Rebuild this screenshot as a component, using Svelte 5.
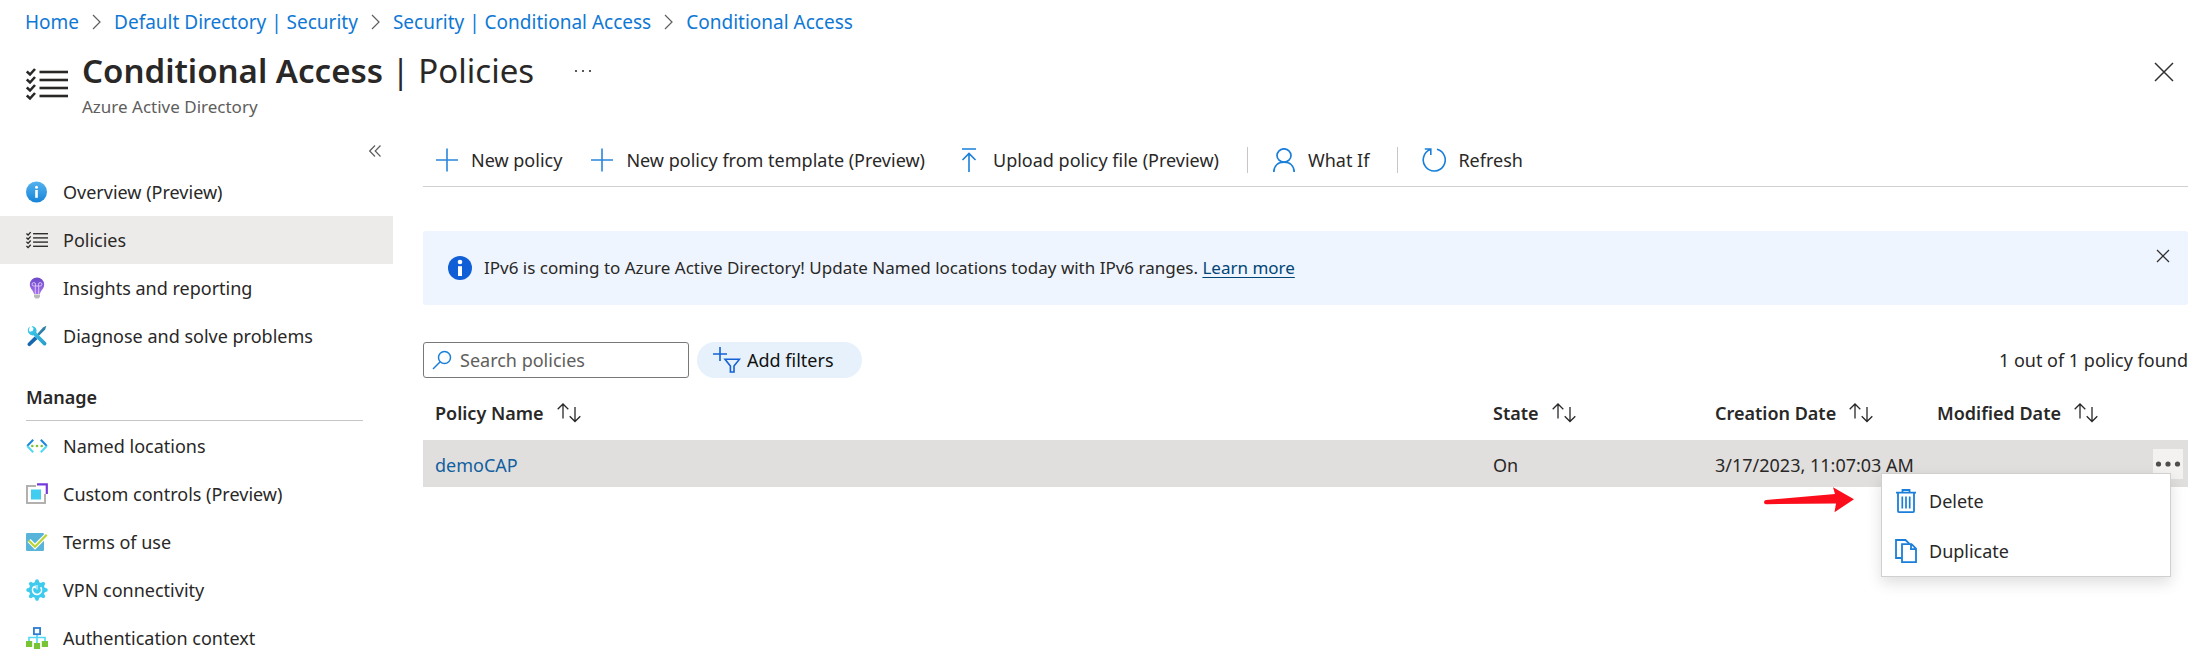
<script>
  const crumbs = ['Home', 'Default Directory | Security', 'Security | Conditional Access', 'Conditional Access'];
  const general = [
    { label: 'Overview (Preview)', icon: 'info' },
    { label: 'Policies', icon: 'policies', active: true },
    { label: 'Insights and reporting', icon: 'bulb' },
    { label: 'Diagnose and solve problems', icon: 'tools' }
  ];
  const manage = [
    { label: 'Named locations', icon: 'locations' },
    { label: 'Custom controls (Preview)', icon: 'controls' },
    { label: 'Terms of use', icon: 'terms' },
    { label: 'VPN connectivity', icon: 'gear' },
    { label: 'Authentication context', icon: 'tree' }
  ];
  const columns = [
    { label: 'Policy Name', cls: 'name' },
    { label: 'State', cls: 'state' },
    { label: 'Creation Date', cls: 'created' },
    { label: 'Modified Date', cls: 'modified' }
  ];
  let query = $state('');
  let menuOpen = $state(true);
  let bannerOpen = $state(true);
</script>

{#snippet checklist(size)}
  <svg width={size} height={size} viewBox="0 0 42 42" fill="none" stroke="#292827" aria-hidden="true">
    {#each [9, 17, 25, 33] as y}
      <path d="M13.500 {y}H42" stroke-width="2.600" />
      <path d="M.8 {y - 0.500}l3.200 3 5-5.500" stroke-width="2.600" />
    {/each}
  </svg>
{/snippet}

{#snippet navIcon(name)}
  {#if name === 'policies'}
    {@render checklist(22)}
  {:else}
    <svg width="22" height="22" viewBox="0 0 22 22" fill="none" aria-hidden="true">
      {#if name === 'info'}
        <circle cx="10.500" cy="11" r="10.500" fill="url(#gInfo)" />
        <circle cx="10.500" cy="6.300" r="1.500" fill="#fff" />
        <path d="M10.500 9v7.800" stroke="#fff" stroke-width="2.600" />
      {:else if name === 'bulb'}
        <path d="M11 .5a7.200 7.200 0 0 0-7.200 7.200c0 3.800 3.700 5.800 4.200 9.300h6c.5-3.500 4.200-5.500 4.200-9.300A7.200 7.200 0 0 0 11 .5Z" fill="url(#gBulb)" />
        <path d="M9.300 17V9H8a1.700 1.700 0 1 1 1.500-1.700V9h3V7.300A1.700 1.700 0 1 1 14 9h-1.300v8" stroke="#d9c3f7" stroke-width="1" />
        <path d="M8 17.500h6v2.300L12.500 21.500h-3L8 19.800Z" fill="#b9b9b9" />
      {:else if name === 'tools'}
        <path d="M20.300.8 17 2.500l-8 9 1.700 1.500 8.500-8.500Z" fill="#2f7fa8" />
        <path d="M8.500 11.500 2 18a1.800 1.800 0 0 0 2.600 2.600L11.500 14Z" fill="#1767ae" />
        <path d="M3.800 1.400A5 5 0 0 0 7.600 10.300l9.700 9.600a1.800 1.800 0 0 0 2.600-2.600L10.400 7.700A5 5 0 0 0 5.500 1l2 2.500-.8 2.600-2.700.7L2 4.500a5 5 0 0 0 .3 3.400Z" fill="url(#gTool)" />
      {:else if name === 'locations'}
        <path d="M7.200 4.800 1.200 11" stroke="#1b86dc" stroke-width="2" />
        <path d="m1.200 11 6 6.200" stroke="#50d8f5" stroke-width="2" />
        <path d="m14.800 4.800 6 6.200" stroke="#1b86dc" stroke-width="2" />
        <path d="m20.800 11-6 6.200" stroke="#50d8f5" stroke-width="2" />
        <circle cx="6.300" cy="11" r="1.300" fill="#7fc339" />
        <circle cx="11" cy="11" r="1.300" fill="#7fc339" />
        <circle cx="15.700" cy="11" r="1.300" fill="#7fc339" />
      {:else if name === 'controls'}
        <path d="M10 3H1v17h18v-9" stroke="#b3b1b0" stroke-width="2" />
        <rect x="5" y="6.500" width="10" height="10" fill="#40cdf0" />
        <path d="M11 1.300h9.800V11" stroke="#773adc" stroke-width="2.200" />
      {:else if name === 'terms'}
        <rect x="0" y="2" width="18" height="18" rx="1.200" fill="#59b4d9" />
        <path d="m3 9.500 6 6L20.500 4" stroke="#fff" stroke-width="4.500" />
        <path d="m2.800 9.500 6.200 6.200L20.700 3.700" stroke="#b8d432" stroke-width="2.200" />
      {:else if name === 'gear'}
        <g fill="#3fcbee">
          <circle cx="11" cy="11" r="8" />
          {#each [0, 45, 90, 135, 180, 225, 270, 315] as a}
            <path d="M8.300 5 9.500.8Q11-.2 12.500.8L13.700 5Z" transform="rotate({a} 11 11)" />
          {/each}
        </g>
        <path d="M8 7.600a4.500 4.500 0 1 0 6.600.6" stroke="#fff" stroke-width="1.600" />
        <path d="M6.600 8.300 9.600 6l.4 3.600" fill="#fff" />
        <path d="M11 6v4.500" stroke="#fff" stroke-width="1" />
      {:else if name === 'tree'}
        <path d="M11 7v9M3 15v-4.500h16V15" stroke="#50d8f5" stroke-width="1.600" />
        <rect x="7.900" y="1" width="6.200" height="6.200" fill="#fff" stroke="#2b7cd3" stroke-width="1.800" />
        <rect x="0" y="14" width="6.200" height="6" fill="#78c434" />
        <rect x="15.800" y="14" width="6.200" height="6" fill="#78c434" />
        <rect x="7.900" y="16" width="6.200" height="6" fill="#78c434" />
      {/if}
    </svg>
  {/if}
{/snippet}

{#snippet navList(items)}
  <ul>
    {#each items as item}
      <li>
        <a href="#policies" class="nav-item" class:active={item.active} aria-current={item.active ? 'page' : undefined}>
          {@render navIcon(item.icon)}
          <span>{item.label}</span>
        </a>
      </li>
    {/each}
  </ul>
{/snippet}

{#snippet plus()}
  <svg width="24" height="24" viewBox="0 0 24 24" fill="none" stroke="#2a86dc" stroke-width="1.600" aria-hidden="true">
    <path d="M12 .5v23M1 12h22" />
  </svg>
{/snippet}

<svg width="0" height="0" class="defs" aria-hidden="true">
  <defs>
    <linearGradient id="gInfo" x1="0" y1="0" x2="0" y2="1"><stop offset="0" stop-color="#55b3ee" /><stop offset="1" stop-color="#1683d8" /></linearGradient>
    <linearGradient id="gBulb" x1="0" y1="0" x2="0" y2="1"><stop offset="0" stop-color="#6b48c8" /><stop offset="1" stop-color="#a770ee" /></linearGradient>
    <linearGradient id="gTool" x1="0" y1="0" x2="1" y2="1"><stop offset="0" stop-color="#3bd0f3" /><stop offset="1" stop-color="#2a9bc9" /></linearGradient>
  </defs>
</svg>

<div class="page">
  <nav class="crumbs" aria-label="Breadcrumb">
    {#each crumbs as crumb, i}
      {#if i > 0}
        <svg width="9" height="16" viewBox="0 0 9 16" fill="none" stroke="#605e5c" stroke-width="1.200" aria-hidden="true"><path d="m1 1 7 7-7 7" /></svg>
      {/if}
      <a href="#top">{crumb}</a>
    {/each}
  </nav>

  <header class="title-bar">
    <div class="title-icon">{@render checklist(42)}</div>
    <div class="titles">
      <div class="title-line">
        <h1><strong>Conditional Access</strong> | Policies</h1>
        <button class="plain" aria-label="More options">
          <svg width="18" height="4" viewBox="0 0 18 4" fill="#323130"><circle cx="2" cy="2" r="1.100" /><circle cx="9" cy="2" r="1.100" /><circle cx="16" cy="2" r="1.100" /></svg>
        </button>
      </div>
      <p>Azure Active Directory</p>
    </div>
    <button class="plain close" aria-label="Close">
      <svg width="20" height="20" viewBox="0 0 20 20" fill="none" stroke="#323130" stroke-width="1.500"><path d="m1 1 18 18M19 1 1 19" /></svg>
    </button>
  </header>

  <div class="body">
    <aside>
      <div class="collapse">
        <button class="plain" aria-label="Collapse menu">
          <svg width="12" height="12" viewBox="0 0 12 12" fill="none" stroke="#605e5c" stroke-width="1.200"><path d="M6 .5.700 6 6 11.500M11.500.5 6.200 6l5.300 5.500" /></svg>
        </button>
      </div>
      {@render navList(general)}
      <h2>Manage</h2>
      {@render navList(manage)}
    </aside>

    <main>
      <div class="toolbar" role="toolbar" aria-label="Policy commands">
        <button>{@render plus()}New policy</button>
        <button>{@render plus()}New policy from template (Preview)</button>
        <button class="upload">
          <svg width="16" height="24" viewBox="0 0 16 24" fill="none" stroke="#1a7fd9" stroke-width="1.600" aria-hidden="true"><path d="M1 1h14M8 24V5.500M1.500 12 8 5.500l6.500 6.500" /></svg>
          Upload policy file (Preview)
        </button>
        <span class="sep"></span>
        <button>
          <svg width="24" height="24" viewBox="0 0 24 24" fill="none" stroke="#1a7fd9" stroke-width="1.700" aria-hidden="true"><ellipse cx="12" cy="7.500" rx="7" ry="6.700" /><path d="M1.800 24c.2-6 4.200-9.800 10.200-9.800S22 18 22.200 24" /></svg>
          What If
        </button>
        <span class="sep"></span>
        <button>
          <svg width="24" height="24" viewBox="0 0 24 24" fill="none" stroke="#1a7fd9" stroke-width="1.600" aria-hidden="true"><path d="M15 1.300A11 11 0 1 1 8.500 1.600M2.800 1h6v6" /></svg>
          Refresh
        </button>
      </div>

      {#if bannerOpen}
        <div class="banner" role="status">
          <svg width="24" height="24" viewBox="0 0 24 24" aria-hidden="true"><circle cx="12" cy="12" r="12" fill="#105fd6" /><circle cx="12" cy="6" r="2.300" fill="#fff" /><path d="M10 10.200h4V20h-4Z" fill="#fff" /></svg>
          <p>IPv6 is coming to Azure Active Directory! Update Named locations today with IPv6 ranges. <a href="#learn">Learn more</a></p>
          <button class="plain" aria-label="Dismiss" onclick={() => (bannerOpen = false)}>
            <svg width="14" height="14" viewBox="0 0 14 14" fill="none" stroke="#323130" stroke-width="1.300"><path d="m1 1 12 12M13 1 1 13" /></svg>
          </button>
        </div>
      {/if}

      <div class="filters">
        <label class="search">
          <svg width="20" height="20" viewBox="0 0 20 20" fill="none" stroke="#1a7fd9" stroke-width="1.500" aria-hidden="true"><circle cx="12.500" cy="7.500" r="6" /><path d="M8.200 11.800 1 19" /></svg>
          <input type="text" placeholder="Search policies" aria-label="Search policies" bind:value={query} />
        </label>
        <button class="pill">
          <svg width="28" height="26" viewBox="0 0 28 26" fill="none" stroke="#1560d4" stroke-width="1.600" aria-hidden="true"><path d="M7 0v14M0 7h14M12 12.200h14.500l-5.500 6.800v6h-3.600v-6Z" /></svg>
          Add filters
        </button>
        <span class="count">1 out of 1 policy found</span>
      </div>

      <table>
        <thead>
          <tr>
            {#each columns as col}
              <th class={col.cls} scope="col">
                <button class="sort">
                  {col.label}
                  <svg width="24" height="20" viewBox="0 0 24 20" fill="none" stroke="#292827" stroke-width="1.300" aria-hidden="true"><path d="M6 15.500V1M.7 6.300 6 1l5.300 5.300M18 4v14.500M12.700 13.200l5.300 5.300 5.300-5.300" /></svg>
                </button>
              </th>
            {/each}
            <th class="actions" aria-label="Actions"></th>
          </tr>
        </thead>
        <tbody>
          <tr>
            <td><a href="#democap">demoCAP</a></td>
            <td>On</td>
            <td>3/17/2023, 11:07:03 AM</td>
            <td></td>
            <td class="actions">
              <div class="more-wrap">
                <button class="more" aria-label="Row actions" aria-expanded={menuOpen} onclick={() => (menuOpen = !menuOpen)}>
                  <svg width="26" height="6" viewBox="0 0 26 6" fill="#504e4c"><circle cx="3.500" cy="3" r="2.600" /><circle cx="13" cy="3" r="2.600" /><circle cx="22.500" cy="3" r="2.600" /></svg>
                </button>
                {#if menuOpen}
                  <svg class="pointer" width="90" height="26" viewBox="0 0 90 26" fill="#fc0d1b" aria-hidden="true"><path d="M2 13Q0 13.300 0 15.200t2 2l70-.6-1.500 8.600L90 12.300 69 .3l2 6.700Z" /></svg>
                  <div class="menu" role="menu">
                    <button role="menuitem">
                      <svg width="22" height="24" viewBox="0 0 22 24" fill="none" stroke="#1a7fd9" stroke-width="1.800" aria-hidden="true"><path d="M1 3.700h20M7.500 3.500V1h7v2.500M3 4v18.200q0 .9.900.9h14.200q.9 0 .9-.9V4" /><path d="M7.300 7.500v12M11 7.500v12M14.700 7.500v12" stroke-width="1.700" /></svg>
                      Delete
                    </button>
                    <button role="menuitem">
                      <svg width="22" height="24" viewBox="0 0 22 24" fill="none" stroke="#1a7fd9" stroke-width="1.800" aria-hidden="true"><path d="M6.500 19H1V1h9.500L14.500 4.800" /><path d="M7 5.200h9.500L21 9.700v13.500H7ZM16 5.500v4.700h5" /></svg>
                      Duplicate
                    </button>
                  </div>
                {/if}
              </div>
            </td>
          </tr>
        </tbody>
      </table>
    </main>
  </div>
</div>

<style>
  :global(body) { background: #fff; }
  .page { font: 18px/24px "Noto Sans", "Open Sans", sans-serif; color: #292827; }
  .defs { position: absolute; }
  svg { display: block; flex: none; }
  a { color: #0f78d4; text-decoration: none; }
  button { font: inherit; color: inherit; background: none; border: 0; padding: 0; margin: 0; cursor: pointer; }
  h1, h2, p, ul { margin: 0; padding: 0; list-style: none; }

  .crumbs { display: flex; align-items: center; gap: 13px; height: 44px; padding-left: 25px; font-size: 19px; }
  .title-bar { display: flex; align-items: flex-start; height: 90px; padding: 0 30px 0 26px; box-sizing: border-box; }
  .title-icon { padding-top: 19px; width: 56px; }
  .titles { flex: 1; }
  .title-line { display: flex; align-items: center; gap: 40px; }
  h1 { font-size: 33px; line-height: 53px; font-weight: 400; }
  h1 strong { font-weight: 600; }
  .titles p { font-size: 17px; line-height: 20px; color: #605e5c; }
  .close { padding-top: 18px; }

  .body { display: flex; gap: 30px; padding-right: 16px; }
  aside { width: 393px; flex: none; }
  .collapse { display: flex; justify-content: flex-end; align-items: center; height: 34px; padding-right: 12px; }
  .nav-item { display: flex; align-items: center; gap: 15px; height: 48px; padding-left: 26px; color: inherit; }
  .nav-item.active { background: #edebe9; }
  h2 { font-size: 18px; line-height: 24px; font-weight: 600; margin: 0 30px 1px 26px; padding: 25px 0 11px; border-bottom: 1px solid #c8c6c4; }

  main { flex: 1; min-width: 0; }
  .toolbar { display: flex; align-items: center; height: 52px; padding-left: 12px; border-bottom: 1px solid #d2d0ce; }
  .toolbar button { display: flex; align-items: center; gap: 12px; margin-right: 28px; white-space: nowrap; }
  .toolbar .upload { gap: 16px; margin-left: 8px; }
  .sep { width: 1px; height: 26px; background: #c8c6c4; margin-right: 24px; }

  .banner { display: flex; align-items: center; gap: 12px; height: 74px; margin-top: 44px; padding: 0 18px 0 25px; background: #eff5fe; border-radius: 3px; }
  .banner p { flex: 1; font-size: 17px; }
  .banner a { color: #004578; text-decoration: underline; text-underline-offset: 3px; }
  .banner button { align-self: flex-start; padding-top: 18px; }

  .filters { display: flex; align-items: center; gap: 8px; margin-top: 37px; }
  .search { display: flex; align-items: center; gap: 8px; width: 266px; height: 36px; padding: 0 8px; box-sizing: border-box; border: 1px solid #7a7877; border-radius: 3px; }
  .search input { flex: 1; min-width: 0; border: 0; outline: 0; padding: 0; background: none; font: inherit; color: inherit; }
  .search input::placeholder { color: #605e5c; opacity: 1; }
  .pill { display: flex; align-items: center; gap: 6px; height: 36px; padding: 0 28px 0 16px; border-radius: 18px; background: #e6f1fb; color: #111; }
  .count { margin-left: auto; }

  table { width: 100%; margin-top: 8px; border-collapse: collapse; table-layout: fixed; }
  th { height: 54px; padding: 0 0 0 12px; box-sizing: border-box; text-align: left; font-weight: 600; }
  td { height: 47px; padding: 2px 0 0 12px; box-sizing: border-box; background: #e1dfdd; white-space: nowrap; }
  td a { color: #1160a0; }
  .state, .created, .modified { width: 222px; }
  .sort { display: flex; align-items: center; gap: 13px; font-weight: 600; }
  .actions { width: 41px; }
  td.actions { padding: 0 0 0 6px; }
  .more-wrap { position: relative; width: 30px; }
  .more { display: flex; align-items: center; justify-content: center; width: 30px; height: 30px; background: #f3f2f1; }
  .menu { position: absolute; top: 24px; right: 12px; width: 290px; box-sizing: border-box; padding: 2px 0 0; background: #fff; border: 1px solid #d2d0ce; box-shadow: 0 6px 14px rgba(0, 0, 0, .13); }
  .menu button { display: flex; align-items: center; gap: 12px; width: 100%; height: 50px; padding-left: 13px; }
  .pointer { position: absolute; top: 38px; right: 329px; }
</style>
